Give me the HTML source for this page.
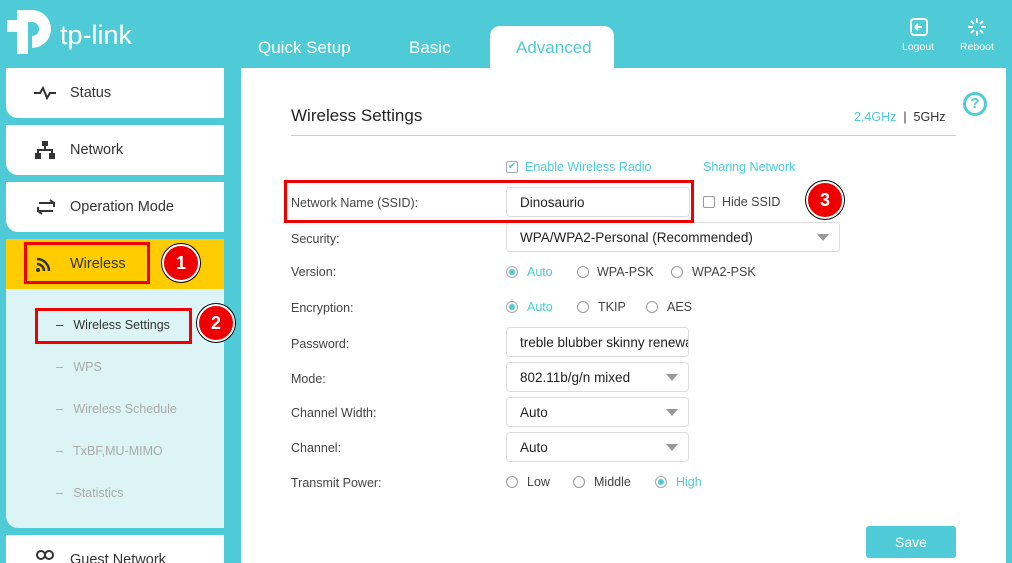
<!DOCTYPE html>
<html><head><meta charset="utf-8"><style>
*{margin:0;padding:0;box-sizing:border-box}
html,body{width:1012px;height:563px;overflow:hidden}
body{background:#4ecbd6;font-family:"Liberation Sans",sans-serif;position:relative;color:#333}
.a{position:absolute}
.tab{position:absolute;top:38px;font-size:17px;color:#fff}
.side{position:absolute;left:6px;width:218px;background:#fff;border-radius:0 0 0 12px}
.side span{position:absolute;left:64px;font-size:14.5px;color:#333}
.lbl{position:absolute;left:291px;font-size:12.5px;color:#444}
.box{position:absolute;left:506px;height:30px;border:1px solid #ddd;border-radius:4px;background:#fff;font-size:13.5px;color:#222;padding:7px 0 0 13px}
.tri{position:absolute;right:10px;top:11px;width:0;height:0;border-left:6px solid transparent;border-right:6px solid transparent;border-top:7px solid #999}
.r{position:absolute;width:12px;height:12px;border:1px solid #999;border-radius:50%;background:#fff}
.r.on{border-color:#aaa}
.r.on::after{content:"";position:absolute;left:2px;top:2px;width:6px;height:6px;border-radius:50%;background:#4ecbd6}
.t{position:absolute;font-size:12.5px;color:#444}
.t.c{color:#4ecbd6}
.sub{position:absolute;left:56px;font-size:12.5px;color:#aaa}
.red{position:absolute;border:3px solid #e00}
.num{position:absolute;width:38px;height:38px;border-radius:50%;background:#e00;border:2px solid #fff;box-shadow:0 0 0 1px #000;color:#fff;font-weight:bold;font-size:18px;text-align:center;line-height:34px}
</style></head><body>
<!-- logo -->
<svg class="a" style="left:6px;top:8px" width="50" height="48" viewBox="0 0 50 48"><path fill="#fff" fill-rule="evenodd" d="M26 2a19 19 0 0 1 0 38V28a7 7 0 0 0 0-14h-4v32H11V24H1V12h10V2z"/></svg>
<div class="a" style="left:60px;top:20px;font-size:27px;color:#fff">tp-link</div>
<div class="tab" style="left:258px">Quick Setup</div>
<div class="tab" style="left:409px">Basic</div>
<div class="a" style="left:490px;top:26px;width:124px;height:44px;background:#fff;border-radius:10px 10px 0 0"></div>
<div class="tab" style="left:516px;color:#4ecbd6">Advanced</div>
<svg class="a" style="left:909px;top:17px" width="20" height="20" viewBox="0 0 20 20"><rect x="2" y="2" width="16" height="16" rx="3" fill="none" stroke="#fff" stroke-width="2"/><path d="M6 10h7M6 10l3-3M6 10l3 3" stroke="#fff" stroke-width="2" fill="none"/></svg>
<div class="a" style="left:902px;top:41px;font-size:10.5px;color:#fff">Logout</div>
<svg class="a" style="left:967px;top:17px" width="20" height="20" viewBox="0 0 20 20" stroke="#fff" stroke-width="2"><path d="M10 1v5M10 14v5M1 10h5M14 10h5M4 4l3 3M13 13l3 3M16 4l-3 3M4 16l3-3"/></svg>
<div class="a" style="left:960px;top:41px;font-size:10.5px;color:#fff">Reboot</div>
<!-- main -->
<div class="a" style="left:241px;top:68px;width:765px;height:495px;background:#fff"></div>
<div class="a" style="left:963px;top:92px;width:24px;height:24px;border:3px solid #4ecbd6;border-radius:50%;color:#4ecbd6;font-weight:bold;font-size:15px;text-align:center;line-height:18px">?</div>
<div class="a" style="left:291px;top:106px;font-size:17px;color:#222">Wireless Settings</div>
<div class="a" style="left:854px;top:110px;font-size:12.5px;color:#4ecbd6">2.4GHz <span style="color:#333">&nbsp;|&nbsp; 5GHz</span></div>
<div class="a" style="left:291px;top:135px;width:665px;height:1px;background:#ccc"></div>
<!-- sidebar -->
<div class="side" style="top:68px;height:50px"><svg class="a" style="left:28px;top:18px" width="22" height="14"><path d="M0 7h6l3-5 4 10 3-5h6" stroke="#333" stroke-width="2" fill="none"/></svg><span style="top:17px">Status</span></div>
<div class="side" style="top:125px;height:50px"><svg class="a" style="left:29px;top:16px" width="20" height="18"><rect x="7" y="0" width="6" height="5" fill="#333"/><rect x="0" y="12" width="6" height="6" fill="#333"/><rect x="14" y="12" width="6" height="6" fill="#333"/><path d="M10 5v4M3 12V9h14v3" stroke="#333" stroke-width="2" fill="none"/></svg><span style="top:17px">Network</span></div>
<div class="side" style="top:182px;height:50px"><svg class="a" style="left:29px;top:16px" width="22" height="18"><path d="M4 5h15v4M18 13H3V9M15 2l4 3M7 16l-4-3" stroke="#333" stroke-width="2" fill="none"/></svg><span style="top:17px">Operation Mode</span></div>
<div class="side" style="top:239px;height:50px;background:#ffcc00;border-radius:0"><svg class="a" style="left:30px;top:17px" width="16" height="16"><circle cx="2" cy="14" r="2" fill="#333"/><path d="M1 8a7 7 0 0 1 7 7M1 3a12 12 0 0 1 12 12" stroke="#333" stroke-width="2.5" fill="none"/></svg><span style="top:17px">Wireless</span></div>
<div class="side" style="top:289px;height:239px;background:#dcf4f5"></div>
<div class="sub" style="top:318px;color:#333">–&nbsp;&nbsp; Wireless Settings</div>
<div class="sub" style="top:360px">–&nbsp;&nbsp; WPS</div>
<div class="sub" style="top:402px">–&nbsp;&nbsp; Wireless Schedule</div>
<div class="sub" style="top:444px">–&nbsp;&nbsp; TxBF,MU-MIMO</div>
<div class="sub" style="top:486px">–&nbsp;&nbsp; Statistics</div>
<div class="side" style="top:535px;height:28px;border-radius:0"><svg class="a" style="left:29px;top:15px" width="20" height="14"><circle cx="6" cy="5" r="4" stroke="#333" stroke-width="2" fill="none"/><circle cx="14" cy="5" r="4" stroke="#333" stroke-width="2" fill="none"/></svg><span style="top:17px">Guest Network</span></div>
<!-- form -->
<div class="a" style="left:506px;top:161px;width:12px;height:12px;border:1px solid #aaa;border-radius:2px;color:#4ecbd6;font-size:10px;line-height:10px;text-align:center">✔</div>
<div class="t c" style="left:525px;top:160px">Enable Wireless Radio</div>
<div class="t c" style="left:703px;top:160px">Sharing Network</div>
<div class="lbl" style="top:196px">Network Name (SSID):</div>
<div class="box" style="top:187px;width:184px">Dinosaurio</div>
<div class="a" style="left:703px;top:196px;width:12px;height:12px;border:1px solid #999;border-radius:2px"></div>
<div class="t" style="left:722px;top:195px">Hide SSID</div>
<div class="lbl" style="top:232px">Security:</div>
<div class="box" style="top:222px;width:334px">WPA/WPA2-Personal (Recommended)<div class="tri"></div></div>
<div class="lbl" style="top:265px">Version:</div>
<div class="r on" style="left:506px;top:266px"></div><div class="t c" style="left:527px;top:265px">Auto</div>
<div class="r" style="left:577px;top:266px"></div><div class="t" style="left:597px;top:265px">WPA-PSK</div>
<div class="r" style="left:671px;top:266px"></div><div class="t" style="left:692px;top:265px">WPA2-PSK</div>
<div class="lbl" style="top:301px">Encryption:</div>
<div class="r on" style="left:506px;top:301px"></div><div class="t c" style="left:527px;top:300px">Auto</div>
<div class="r" style="left:577px;top:301px"></div><div class="t" style="left:598px;top:300px">TKIP</div>
<div class="r" style="left:646px;top:301px"></div><div class="t" style="left:667px;top:300px">AES</div>
<div class="lbl" style="top:337px">Password:</div>
<div class="box" style="top:327px;width:183px;overflow:hidden;white-space:nowrap">treble blubber skinny renewal</div>
<div class="lbl" style="top:372px">Mode:</div>
<div class="box" style="top:362px;width:183px">802.11b/g/n mixed<div class="tri"></div></div>
<div class="lbl" style="top:406px">Channel Width:</div>
<div class="box" style="top:397px;width:183px">Auto<div class="tri"></div></div>
<div class="lbl" style="top:441px">Channel:</div>
<div class="box" style="top:432px;width:183px">Auto<div class="tri"></div></div>
<div class="lbl" style="top:476px">Transmit Power:</div>
<div class="r" style="left:506px;top:476px"></div><div class="t" style="left:527px;top:475px">Low</div>
<div class="r" style="left:573px;top:476px"></div><div class="t" style="left:594px;top:475px">Middle</div>
<div class="r on" style="left:655px;top:476px"></div><div class="t c" style="left:676px;top:475px">High</div>
<div class="a" style="left:866px;top:526px;width:90px;height:32px;background:#4ecbd6;border-radius:3px;color:#fff;font-size:14px;text-align:center;line-height:32px">Save</div>
<!-- annotations -->
<div class="red" style="left:284px;top:180px;width:410px;height:43px"></div>
<div class="red" style="left:24px;top:242px;width:126px;height:42px"></div>
<div class="red" style="left:35px;top:308px;width:157px;height:36px"></div>
<div class="num" style="left:162px;top:244px">1</div>
<div class="num" style="left:197px;top:304px">2</div>
<div class="num" style="left:806px;top:181px">3</div>
</body></html>
